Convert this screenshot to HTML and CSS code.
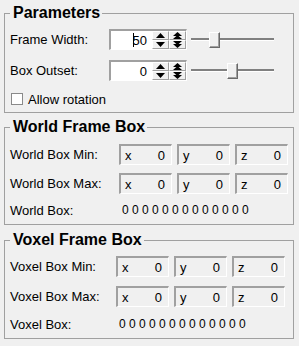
FILE: index.html
```html
<!DOCTYPE html>
<html>
<head>
  <title>Parameters</title>
  <link rel="stylesheet" href="styles.css">
</head>
<body>
  <fieldset class="group params">
    <legend>Parameters</legend>
    <div class="group-body">
      <div class="label">Frame Width:</div>
      <div class="spin">
        <div class="spin-field"><span class="caret"></span>50</div>
        <div class="spin-button">
          <div class="spin-half"><svg width="9" height="5" viewBox="0 0 9 5"><path d="M0 5h9L4.5 0z"/></svg></div>
          <div class="spin-half"><svg width="9" height="5" viewBox="0 0 9 5"><path d="M0 0h9L4.5 5z"/></svg></div>
        </div>
        <div class="spin-button">
          <div class="spin-half"><svg width="9" height="7" viewBox="0 0 9 7"><path d="M0 4h9L4.5 0zM0 7h9L4.5 3z"/></svg></div>
          <div class="spin-half"><svg width="9" height="7" viewBox="0 0 9 7"><path d="M0 0h9L4.5 4zM0 3h9L4.5 7z"/></svg></div>
        </div>
      </div>
      <div class="slider">
        <div class="slider-track"></div>
        <div class="slider-handle" style="left: 18px"></div>
      </div>

      <div class="label">Box Outset:</div>
      <div class="spin">
        <div class="spin-field">0</div>
        <div class="spin-button">
          <div class="spin-half"><svg width="9" height="5" viewBox="0 0 9 5"><path d="M0 5h9L4.5 0z"/></svg></div>
          <div class="spin-half"><svg width="9" height="5" viewBox="0 0 9 5"><path d="M0 0h9L4.5 5z"/></svg></div>
        </div>
        <div class="spin-button">
          <div class="spin-half"><svg width="9" height="7" viewBox="0 0 9 7"><path d="M0 4h9L4.5 0zM0 7h9L4.5 3z"/></svg></div>
          <div class="spin-half"><svg width="9" height="7" viewBox="0 0 9 7"><path d="M0 0h9L4.5 4zM0 3h9L4.5 7z"/></svg></div>
        </div>
      </div>
      <div class="slider">
        <div class="slider-track"></div>
        <div class="slider-handle" style="left: 36px"></div>
      </div>

      <label class="check"><span class="check-box"></span>Allow rotation</label>
    </div>
  </fieldset>

  <fieldset class="group world">
    <legend>World Frame Box</legend>
    <div class="group-body">
      <div class="label">World Box Min:</div>
      <div class="coord"><span>x</span><span>0</span></div>
      <div class="coord"><span>y</span><span>0</span></div>
      <div class="coord"><span>z</span><span>0</span></div>

      <div class="label">World Box Max:</div>
      <div class="coord"><span>x</span><span>0</span></div>
      <div class="coord"><span>y</span><span>0</span></div>
      <div class="coord"><span>z</span><span>0</span></div>

      <div class="label">World Box:</div>
      <div class="box-value">0 0 0 0 0 0 0 0 0 0 0 0 0</div>
    </div>
  </fieldset>

  <fieldset class="group voxel">
    <legend>Voxel Frame Box</legend>
    <div class="group-body">
      <div class="label">Voxel Box Min:</div>
      <div class="coord"><span>x</span><span>0</span></div>
      <div class="coord"><span>y</span><span>0</span></div>
      <div class="coord"><span>z</span><span>0</span></div>

      <div class="label">Voxel Box Max:</div>
      <div class="coord"><span>x</span><span>0</span></div>
      <div class="coord"><span>y</span><span>0</span></div>
      <div class="coord"><span>z</span><span>0</span></div>

      <div class="label">Voxel Box:</div>
      <div class="box-value">0 0 0 0 0 0 0 0 0 0 0 0 0</div>
    </div>
  </fieldset>
</body>
</html>
```

FILE: styles.css
```css
html, body {
  margin: 0;
}
body {
  background-color: #f0f0f0;
  font-family: "Liberation Sans", Arial, sans-serif;
  font-size: 13px;
  color: #000;
  padding-top: 4px;
}
.group {
  margin: 0 5px 5px 4px;
  padding: 7px 5px;
  border: 1px solid #a0a0a0;
  min-width: 0;
}
.group legend {
  font-size: 16px;
  font-weight: bold;
  line-height: 18px;
  padding: 0 2px 0 3px;
}
.group-body {
  display: grid;
  align-items: center;
}
.params .group-body {
  grid-template-columns: 99px 78px auto;
  grid-template-rows: 21px 21px 14px;
  row-gap: 10px;
}
.world {
  padding: 8px 5px 6px;
  margin-bottom: 6px;
}
.world .group-body {
  grid-template-columns: 104px repeat(3, 53px);
  grid-template-rows: 21px 21px 16px;
  column-gap: 5px;
  row-gap: 8px;
}
.voxel {
  padding: 7px 5px 6px;
}
.voxel .group-body {
  grid-template-columns: 101px repeat(3, 53px);
  grid-template-rows: 21px 21px 16px;
  column-gap: 5px;
  row-gap: 9px;
}
.label {
  white-space: nowrap;
}

/* spin box */
.spin {
  display: flex;
  height: 21px;
  box-sizing: border-box;
  border-top: 2px solid #a0a0a0;
  border-left: 2px solid #a0a0a0;
  border-right: 1px solid #fff;
  border-bottom: 1px solid #fff;
}
.spin-field {
  flex: 0 0 41px;
  display: flex;
  align-items: center;
  justify-content: flex-end;
  box-sizing: border-box;
  padding-right: 5px;
  background-color: #fff;
}
.caret {
  display: inline-block;
  width: 1px;
  height: 14px;
  margin-right: -1px;
  background-color: #000;
}
.spin-button {
  flex: 0 0 17px;
  display: flex;
  flex-direction: column;
}
.spin-half {
  flex: 1;
  display: flex;
  align-items: center;
  justify-content: center;
  border-top: 1px solid #fff;
  border-left: 1px solid #fff;
  border-right: 1px solid #a0a0a0;
  border-bottom: 1px solid #a0a0a0;
  background-color: #f0f0f0;
}
.spin-half svg {
  display: block;
  fill: #000;
}

/* slider */
.slider {
  position: relative;
  width: 83px;
  height: 21px;
  margin-left: 4px;
}
.slider-track {
  margin-top: 9px;
  height: 2px;
  background-color: #808080;
  border-bottom: 1px solid #fff;
}
.slider-handle {
  position: absolute;
  top: 3px;
  width: 9px;
  height: 14px;
  background-color: #f0f0f0;
  border-top: 1px solid #fff;
  border-left: 1px solid #fff;
  border-right: 1px solid #696969;
  border-bottom: 1px solid #696969;
  box-shadow: inset -1px -1px #a0a0a0;
}

/* checkbox */
.check {
  grid-column: 1 / -1;
  display: flex;
  align-items: center;
  gap: 5px;
  height: 14px;
  margin-top: 2px;
  padding-left: 1px;
}
.check-box {
  width: 10px;
  height: 10px;
  border: 1px solid #8a8a8a;
  background-color: #fff;
}

/* coordinate fields */
.coord {
  display: flex;
  justify-content: space-between;
  align-items: center;
  height: 21px;
  box-sizing: border-box;
  padding: 0 6px 0 4px;
  border-top: 2px solid #a0a0a0;
  border-left: 2px solid #a0a0a0;
  border-right: 1px solid #fff;
  border-bottom: 1px solid #fff;
}
.box-value {
  grid-column: 2 / -1;
  padding-left: 3px;
  font-size: 12px;
  white-space: nowrap;
}
```
